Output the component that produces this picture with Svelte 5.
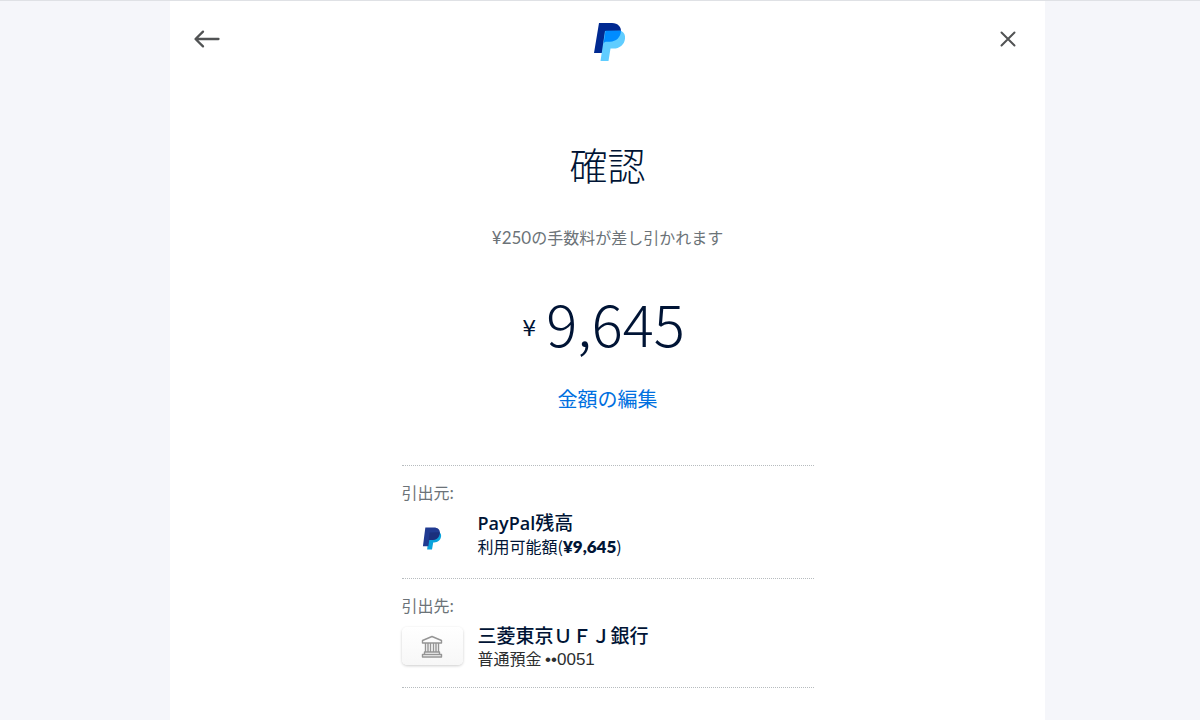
<script>
  let currency = '¥'
  let amount = '9,645'
  let fee = '¥250'
</script>

<div class="page">
  <main class="panel">
    <header class="top">
      <button class="icon-btn back" aria-label="戻る">
        <svg width="28" height="20" viewBox="0 0 28 20" fill="none" stroke="#515354" stroke-width="2.3" stroke-linecap="round" stroke-linejoin="round">
          <path d="M25.500 10H2.800M10 2.600L2.500 10l7.500 7.400" />
        </svg>
      </button>
      <svg width="32" height="38" viewBox="0 0 32 38" role="img" aria-label="PayPal">
        <path fill="#002991" d="M5 0h13c6 0 9.500 4 9 9-.6 6.500-5.500 10-11 10h-5.500L8.500 30H0z" />
        <path fill="#60cdff" d="M11 8l16-.2c3.200 1.800 4.500 4.500 4 8-.8 6.200-5.500 9.800-11.500 9.800H16.500L14.500 38H6.500z" />
        <path fill="#008cff" d="M11.500 7.800H27c-.2 6.500-5 10.900-11 10.900h-3.500c-1.500 0-2.300.7-2.900 1.600z" />
      </svg>
      <button class="icon-btn" aria-label="閉じる">
        <svg width="16" height="16" viewBox="0 0 16 16" fill="none" stroke="#515354" stroke-width="2" stroke-linecap="round">
          <path d="M1.500 1.500l13 13M14.500 1.500l-13 13" />
        </svg>
      </button>
    </header>

    <section class="review">
      <h1>確認</h1>
      <p class="fee"><span>{fee}</span>の手数料が差し引かれます</p>
      <p class="amount"><span class="currency">{currency}</span><span class="value">{amount}</span></p>
      <a class="edit" href="#amount">金額の編集</a>
    </section>

    <section class="sources">
      <div class="source">
        <h2>引出元:</h2>
        <div class="row">
          <div class="art balance">
            <svg width="20" height="23" viewBox="0 0 32 38" aria-hidden="true">
              <path fill="#0aa3dc" d="M11 8l16-.2c3.200 1.800 4.500 4.500 4 8-.8 6.200-5.500 9.800-11.500 9.800H18L16 37H8z" />
              <path fill="#203a91" d="M5 1h14c6.500 0 10.500 3.500 10 9-.6 7.500-6 11.500-12 11.500h-5.500L10 32H1z" />
              <path fill="#1b2f7d" d="M12 9l16.500-.2c0 7.500-5 12.700-11.500 12.700h-6.500z" />
            </svg>
          </div>
          <div class="info">
            <p class="name"><span class="brand">PayPal</span>残高</p>
            <p class="detail navy">利用可能額(<b>{currency}{amount}</b>)</p>
          </div>
        </div>
      </div>

      <div class="source">
        <h2>引出先:</h2>
        <div class="row">
          <div class="art card">
            <svg width="22" height="23" viewBox="0 0 22 23" fill="none" stroke="#959595" stroke-width="1.400" stroke-linejoin="round" aria-hidden="true">
              <path d="M11 1.500L1.500 5.500v2.500h19V5.500zM4.500 8v9h2.500V8M9.500 8v9h3V8M15 8v9h2.500V8M3.500 17h15v2.500h-15zM1.500 19.500h19V22h-19z" />
            </svg>
          </div>
          <div class="info">
            <p class="name">三菱東京ＵＦＪ銀行</p>
            <p class="detail">普通預金 <span class="digits">••0051</span></p>
          </div>
        </div>
      </div>
    </section>
  </main>
</div>

<style>
  :global(body) {
    background: #f5f6fa;
  }

  .page {
    padding-left: 15px;
    border-top: 1px solid #dfe1e5;
    font-family: "Noto Sans CJK JP", sans-serif;
    color: #001435;
  }

  .panel {
    box-sizing: border-box;
    max-width: 875px;
    min-height: calc(100vh - 1px);
    margin: 0 auto;
    background: #fff;
  }

  h1,
  h2,
  p {
    margin: 0;
  }

  .top {
    display: flex;
    justify-content: space-between;
    align-items: flex-start;
    padding: 22px 23px 18px;
  }

  .icon-btn {
    display: flex;
    justify-content: center;
    align-items: center;
    width: 28px;
    height: 32px;
    padding: 0;
    border: none;
    background: none;
    cursor: pointer;
  }

  .back {
    justify-content: flex-start;
    width: 32px;
  }

  .review {
    display: flex;
    flex-direction: column;
    align-items: center;
    padding-top: 55px;
  }

  h1 {
    font-size: 38px;
    line-height: 60px;
    font-weight: 300;
  }

  .fee {
    margin-top: 31px;
    font-size: 16px;
    line-height: 24px;
    color: #6c7378;
  }

  .fee span {
    font-family: "Lato", sans-serif;
    font-size: 17px;
  }

  .amount {
    display: flex;
    align-items: flex-start;
    gap: 10px;
    margin-top: 36px;
    padding-right: 8px;
  }

  .currency {
    font-family: "DejaVu Sans", sans-serif;
    font-size: 22px;
    line-height: 86px;
  }

  .value {
    font-size: 58px;
    line-height: 72px;
    font-weight: 300;
  }

  .edit {
    margin-top: 12px;
    font-size: 20px;
    line-height: 30px;
    color: #0070e0;
    text-decoration: none;
  }

  .sources {
    max-width: 412px;
    margin: 51px auto 0;
    border-top: 1px dotted #b7bcbf;
  }

  .source {
    padding: 14px 0 16px;
    border-bottom: 1px dotted #b7bcbf;
  }

  h2 {
    font-size: 16px;
    line-height: 24px;
    font-weight: 400;
    color: #6c7378;
  }

  .row {
    display: flex;
    align-items: flex-start;
    gap: 15px;
    padding-top: 6px;
  }

  .art {
    display: flex;
    justify-content: center;
    align-items: center;
    width: 61px;
    height: 38px;
    margin: 4px 0;
  }

  .balance {
    height: 44px;
    margin: 6px 0 2px;
  }

  .card {
    border-radius: 5px;
    background: linear-gradient(#fff, #f7f7f7);
    box-shadow: 0 1px 3px rgba(0, 0, 0, 0.2);
  }

  .name {
    font-size: 19px;
    line-height: 24px;
    font-weight: 500;
  }

  .brand {
    font-family: "Open Sans", sans-serif;
    font-size: 18px;
    font-weight: 600;
  }

  .detail {
    font-size: 16px;
    line-height: 22px;
    color: #2c2e2f;
  }

  .detail.navy {
    color: #001435;
  }

  .detail b {
    font-family: "Lato", sans-serif;
    font-size: 17px;
    font-weight: 800;
  }

  .digits {
    font-family: "Liberation Sans", sans-serif;
    font-size: 17px;
  }
</style>
